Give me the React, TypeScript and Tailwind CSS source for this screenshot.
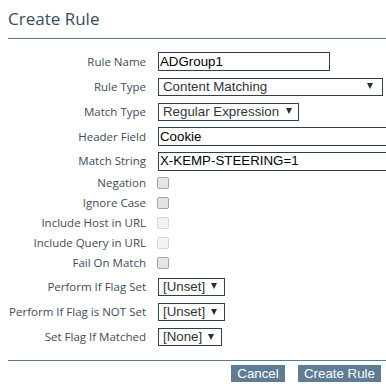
import type { ReactNode } from "react";

const Label = ({ children }: { children: ReactNode }) => (
  <div className="w-[138px] shrink-0 whitespace-nowrap text-right text-[11.5px] text-[#3e4b5b]">{children}</div>
);

const Row = ({ label, h, children }: { label: string; h: string; children: ReactNode }) => (
  <div className={`flex items-center gap-3 ${h}`}>
    <Label>{label}</Label>
    {children}
  </div>
);

const TextBox = ({ value, w }: { value: string; w: string }) => (
  <div
    className={`${w} h-[19px] shrink-0 border border-[#2f3f50] pl-px flex items-center font-['Liberation_Sans',Arial,sans-serif] text-[13.3px] text-black whitespace-nowrap overflow-hidden`}
  >
    {value}
  </div>
);

const Select = ({ value, w, pr = "pr-[7px]" }: { value: string; w: string; pr?: string }) => (
  <div
    className={`${w} ${pr} h-[18px] shrink-0 border border-[#2f3f50] pl-1 flex items-center justify-between font-['Liberation_Sans',Arial,sans-serif] text-[13.3px] text-[#333] whitespace-nowrap`}
  >
    <span>{value}</span>
    <svg width="6" height="6" viewBox="0 0 6 6" className="mb-px">
      <polygon points="0,0 6,0 3,6" fill="#2e2e2e" />
    </svg>
  </div>
);

const Check = ({ disabled }: { disabled?: boolean }) => (
  <div
    className={`ml-[-1px] w-3 h-3 rounded-[2px] border ${
      disabled ? "border-[#d6d6d6] bg-[#f3f3f3]" : "border-[#a5a5a5] bg-[#e4e4e4]"
    }`}
  />
);

export default function App() {
  return (
    <div className="w-[386px] h-[389px] overflow-hidden bg-white font-['Open_Sans',sans-serif]">
      <div className="ml-2 h-[39px] border-b border-[#5a7a90] flex items-center pb-[2px]">
        <h1 className="text-[17px] text-[#3c4b5b] leading-none">Create Rule</h1>
      </div>

      <div className="ml-2 pt-[10px]">
        <Row label="Rule Name" h="h-[25px]">
          <TextBox value="ADGroup1" w="w-[172px]" />
        </Row>
        <Row label="Rule Type" h="h-[25px]">
          <Select value="Content Matching" w="w-[225px]" pr="pr-[9px]" />
        </Row>
        <Row label="Match Type" h="h-[25px]">
          <Select value="Regular Expression" w="w-[141px]" pr="pr-[6px]" />
        </Row>
        <Row label="Header Field" h="h-[25px]">
          <TextBox value="Cookie" w="w-[240px]" />
        </Row>
        <Row label="Match String" h="h-[24px]">
          <TextBox value="X-KEMP-STEERING=1" w="w-[240px]" />
        </Row>
        <Row label="Negation" h="h-[20px]">
          <Check />
        </Row>
        <Row label="Ignore Case" h="h-[20px]">
          <Check />
        </Row>
        <Row label="Include Host in URL" h="h-[20px]">
          <Check disabled />
        </Row>
        <Row label="Include Query in URL" h="h-[20px]">
          <Check disabled />
        </Row>
        <Row label="Fail On Match" h="h-[20px]">
          <Check />
        </Row>
        <Row label="Perform If Flag Set" h="h-[27px]">
          <Select value="[Unset]" w="w-[67px]" />
        </Row>
        <Row label="Perform If Flag is NOT Set" h="h-[24px]">
          <Select value="[Unset]" w="w-[67px]" />
        </Row>
        <Row label="Set Flag If Matched" h="h-[26px]">
          <Select value="[None]" w="w-[64px]" />
        </Row>
      </div>

      <div className="ml-2 mt-[10px] border-t border-[#5a7a90]" />

      <div className="flex justify-end gap-[13px] pr-[5px] pt-1 font-['Liberation_Sans',Arial,sans-serif] text-[13.3px] text-white">
        <button className="w-[54px] h-[17px] bg-[#5e7d95] leading-none">Cancel</button>
        <button className="w-[83px] h-[17px] bg-[#5e7d95] leading-none">Create Rule</button>
      </div>
    </div>
  );
}
